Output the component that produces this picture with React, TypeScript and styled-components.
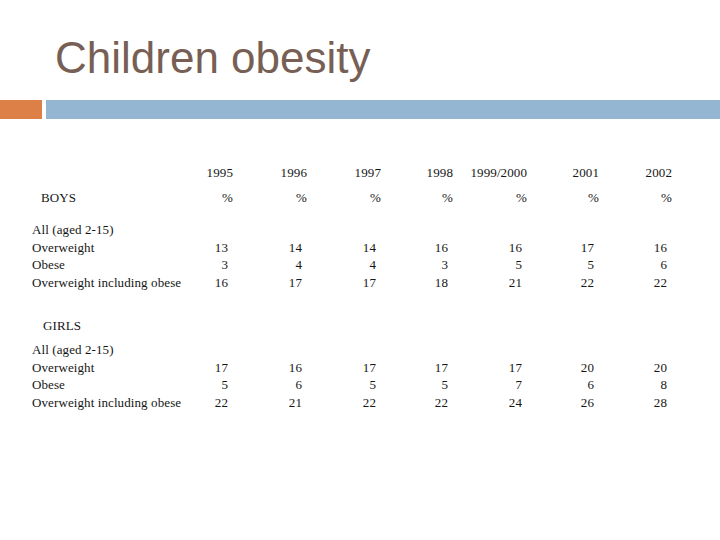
import React from "react";
import styled, { createGlobalStyle } from "styled-components";

const Global = createGlobalStyle`
  html, body { margin: 0; padding: 0; background: #ffffff; }
  body { width: 720px; height: 540px; overflow: hidden; }
`;

const Slide = styled.div`
  width: 720px;
  height: 540px;
  background: #ffffff;
  display: flex;
  flex-direction: column;
`;

const Title = styled.h1`
  margin: 0;
  padding: 36px 0 0 55px;
  font-family: "Liberation Sans", Arial, sans-serif;
  font-weight: 400;
  font-size: 44px;
  line-height: 44px;
  color: #775f55;
`;

const Rule = styled.div`
  margin-top: 20px;
  height: 19px;
  display: flex;
  gap: 4px;
`;

const RuleSegment = styled.div<{ $color: string; $width?: number }>`
  background: ${(p) => p.$color};
  ${(p) => (p.$width ? `width: ${p.$width}px; flex: none;` : "flex: 1;")}
`;

const Table = styled.div`
  margin-top: 45px;
  padding-left: 32px;
  display: flex;
  flex-direction: column;
  font-family: "Liberation Serif", "Times New Roman", serif;
  font-size: 13px;
  letter-spacing: 0.1px;
  color: #161616;
`;

const Row = styled.div<{ $top?: number }>`
  display: grid;
  grid-template-columns: 158px 43px 74px 74px 72px 74px 72px 73px;
  height: 17.5px;
  line-height: 17.5px;
  margin-top: ${(p) => p.$top ?? 0}px;
  white-space: nowrap;
`;

const Label = styled.div<{ $indent?: number }>`
  padding-left: ${(p) => p.$indent ?? 0}px;
`;

const Head = styled.div`
  text-align: right;
`;

const Num = styled.div`
  text-align: right;
  padding-right: 5px;
`;

const years = ["1995", "1996", "1997", "1998", "1999/2000", "2001", "2002"];

type Group = {
  name: string;
  indent: number;
  top: number;
  firstTop: number;
  rows: { label: string; values: number[] }[];
};

const groups: Group[] = [
  {
    name: "BOYS",
    indent: 9,
    top: 7.5,
    firstTop: 14.5,
    rows: [
      { label: "Overweight", values: [13, 14, 14, 16, 16, 17, 16] },
      { label: "Obese", values: [3, 4, 4, 3, 5, 5, 6] },
      { label: "Overweight including obese", values: [16, 17, 17, 18, 21, 22, 22] },
    ],
  },
  {
    name: "GIRLS",
    indent: 11,
    top: 26,
    firstTop: 6.5,
    rows: [
      { label: "Overweight", values: [17, 16, 17, 17, 17, 20, 20] },
      { label: "Obese", values: [5, 6, 5, 5, 7, 6, 8] },
      { label: "Overweight including obese", values: [22, 21, 22, 22, 24, 26, 28] },
    ],
  },
];

export default function App() {
  return (
    <Slide>
      <Global />
      <Title>Children obesity</Title>
      <Rule>
        <RuleSegment $color="#dd8047" $width={42} />
        <RuleSegment $color="#94b6d2" />
      </Rule>
      <Table>
        <Row>
          <Label />
          {years.map((y) => (
            <Head key={y}>{y}</Head>
          ))}
        </Row>
        {groups.map((g) => (
          <React.Fragment key={g.name}>
            <Row $top={g.top}>
              <Label $indent={g.indent}>{g.name}</Label>
              {g.name === "BOYS" && years.map((y) => <Head key={y}>%</Head>)}
            </Row>
            <Row $top={g.firstTop}>
              <Label>All (aged 2-15)</Label>
            </Row>
            {g.rows.map((r) => (
              <Row key={r.label}>
                <Label>{r.label}</Label>
                {r.values.map((v, i) => (
                  <Num key={i}>{v}</Num>
                ))}
              </Row>
            ))}
          </React.Fragment>
        ))}
      </Table>
    </Slide>
  );
}
